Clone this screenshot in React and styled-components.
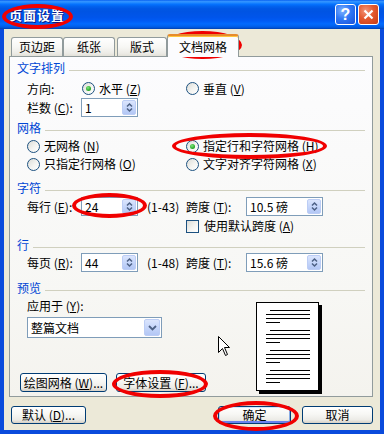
import React from "react";
import styled, { createGlobalStyle, css } from "styled-components";

const GlobalStyle = createGlobalStyle`
  html, body {
    margin: 0;
    padding: 0;
    background: #ffffff;
  }
  body {
    font-family: "Noto Sans CJK SC", "Noto Sans", sans-serif;
    font-size: 12px;
    line-height: 16px;
    color: #000000;
  }
  * {
    box-sizing: border-box;
  }
`;

const Window = styled.div`
  position: relative;
  width: 384px;
  height: 434px;
  display: flex;
  flex-direction: column;
  background: #0a4bdc;
  overflow: hidden;
`;

const TitleBar = styled.div`
  height: 29px;
  display: flex;
  align-items: center;
  gap: 2px;
  padding: 0 5px 0 9px;
  background: linear-gradient(
    180deg,
    #0058ee 0%,
    #3593ff 4%,
    #288eff 8%,
    #127dff 12%,
    #036ffc 16%,
    #0262ee 22%,
    #0057e5 30%,
    #0054e3 40%,
    #0055eb 60%,
    #005bf5 72%,
    #026afe 82%,
    #0062ef 90%,
    #0052d6 96%,
    #0040ab 100%
  );
`;

const TitleText = styled.div`
  flex: 1;
  color: #ffffff;
  font-weight: bold;
  font-size: 13px;
  letter-spacing: 1px;
  text-shadow: 1px 1px 0 #0a1883;
`;

const CaptionButton = styled.div`
  width: 21px;
  height: 21px;
  border: 1px solid #ffffff;
  border-radius: 3px;
  display: flex;
  align-items: center;
  justify-content: center;
  color: #ffffff;
  font-family: "Liberation Sans", sans-serif;
  font-weight: bold;
  font-size: 16px;
  ${(p) =>
    p.$close
      ? css`
          background: radial-gradient(circle at 35% 30%, #f2957a 0%, #e4592f 45%, #c73c14 100%);
        `
      : css`
          background: radial-gradient(circle at 35% 30%, #7fb2ff 0%, #2f78f5 45%, #1750d8 100%);
        `}
`;

const Body = styled.div`
  flex: 1;
  margin: 0 4px 4px;
  background: #ece9d8;
  display: flex;
  flex-direction: column;
  padding-top: 5px;
`;

const TabStrip = styled.div`
  display: flex;
  align-items: flex-end;
  height: 22px;
  padding-left: 7px;
  position: relative;
  z-index: 1;
`;

const Tab = styled.div`
  width: ${(p) => p.$w}px;
  height: 19px;
  margin-left: ${(p) => p.$ml || 0}px;
  border: 1px solid #919b9c;
  border-bottom: none;
  border-radius: 3px 3px 0 0;
  background: linear-gradient(180deg, #ffffff 0%, #f7f7f4 50%, #ecebe6 85%, #e2e0d8 100%);
  display: flex;
  align-items: center;
  justify-content: center;
  ${(p) =>
    p.$active &&
    css`
      height: 23px;
      margin-bottom: -1px;
      border-top: 2px solid #e68b2c;
      background: #fcfcfe;
      box-shadow: inset 0 1px 0 #ffc73c;
      padding-top: 1px;
    `}
`;

const Panel = styled.div`
  margin-left: 5px;
  width: 364px;
  height: 341px;
  border: 1px solid #919b9c;
  background: linear-gradient(180deg, #fcfcfe 0%, #f7f7f4 70%, #f4f3ee 100%);
  padding: 3px 7px 0 7px;
  display: flex;
  flex-direction: column;
`;

const GroupHeading = styled.div`
  display: flex;
  align-items: center;
  gap: 4px;
  height: 16px;
  margin-top: ${(p) => p.$mt || 0}px;
  color: #0046d5;

  &::after {
    content: "";
    flex: 1;
    height: 1px;
    margin-top: 4px;
    background: #d0d0bf;
  }
`;

const Row = styled.div`
  display: grid;
  grid-template-columns: 54px 105px 60px 1fr;
  align-items: center;
  height: ${(p) => p.$h || 19}px;
  margin-top: ${(p) => p.$mt || 0}px;
  padding-left: 10px;
  white-space: nowrap;
`;

const Cell = styled.div`
  grid-column: ${(p) => p.$col || "auto"};
  display: flex;
  align-items: center;
  gap: ${(p) => p.$gap || 0}px;
  padding-left: ${(p) => p.$pl || 0}px;
`;

const Choice = styled.span`
  display: inline-flex;
  align-items: center;
  gap: ${(p) => p.$gap || 4}px;
`;

const RadioDot = styled.span`
  position: relative;
  width: 13px;
  height: 13px;
  border-radius: 50%;
  border: 1px solid #1c5180;
  background: linear-gradient(135deg, #dcdcd7 0%, #f4f4f1 55%, #ffffff 100%);
  flex-shrink: 0;

  ${(p) =>
    p.$checked &&
    css`
      &::after {
        content: "";
        position: absolute;
        left: 3px;
        top: 3px;
        width: 5px;
        height: 5px;
        border-radius: 50%;
        background: radial-gradient(circle at 40% 35%, #7de77d 0%, #21a121 70%);
      }
    `}
`;

const CheckBox = styled.span`
  width: 13px;
  height: 13px;
  border: 1px solid #1c5180;
  background: linear-gradient(135deg, #dcdcd7 0%, #f4f4f1 55%, #ffffff 100%);
  flex-shrink: 0;
`;

const SpinBox = styled.div`
  width: ${(p) => p.$w}px;
  height: 19px;
  border: 1px solid #7f9db9;
  background: #ffffff;
  display: flex;
  align-items: center;
  padding: 0 1px 0 3px;
`;

const FieldValue = styled.span`
  flex: 1;
  white-space: pre;
`;

const ArrowButton = styled.div`
  width: ${(p) => p.$w || 14}px;
  height: ${(p) => p.$h || 15}px;
  border-radius: 2px;
  border: 1px solid #bccdf5;
  background: linear-gradient(180deg, #dbe5fd 0%, #c6d6fa 50%, #b3c7f5 100%);
  display: flex;
  align-items: center;
  justify-content: center;
`;

const ComboBox = styled.div`
  width: 135px;
  height: 21px;
  margin: 3px 0 0 7px;
  border: 1px solid #7f9db9;
  background: #ffffff;
  display: flex;
  align-items: center;
  padding: 0 1px 0 3px;
`;

const PreviewBody = styled.div`
  flex: 1;
  display: flex;
`;

const PreviewLeft = styled.div`
  width: 239px;
  padding-left: 3px;
  display: flex;
  flex-direction: column;
`;

const PlainLabel = styled.div`
  height: 16px;
  margin: 2px 0 0 7px;
`;

const ButtonRow = styled.div`
  display: flex;
  gap: 9px;
  margin-top: auto;
  margin-bottom: 4px;
`;

const XPButton = styled.div`
  width: ${(p) => p.$w}px;
  height: ${(p) => p.$h || 18}px;
  margin-left: ${(p) => (p.$push ? "auto" : "0")};
  border: 1px solid #003c74;
  border-radius: 3px;
  background: linear-gradient(180deg, #ffffff 0%, #f7f7f4 45%, #ecebe6 80%, #d6d0c5 100%);
  display: flex;
  align-items: center;
  justify-content: center;
  white-space: nowrap;
  ${(p) =>
    p.$default &&
    css`
      box-shadow: inset 0 1px 0 #cee7ff, inset 1px 0 0 #bcd4f6, inset -1px 0 0 #89ade4,
        inset 0 -2px 0 #6982ee;
    `}
`;

const PagePreview = styled.svg`
  margin-top: 6px;
  flex-shrink: 0;
`;

const Footer = styled.div`
  display: flex;
  gap: 11px;
  margin-top: 9px;
  padding: 0 7px;
`;

const Mark = styled.div`
  position: absolute;
  left: ${(p) => p.$x}px;
  top: ${(p) => p.$y}px;
  width: ${(p) => p.$w}px;
  height: ${(p) => p.$h}px;
  border: 4px solid #f00000;
  border-radius: 50%;
  pointer-events: none;
`;

const Pointer = styled.svg`
  position: absolute;
  left: 218px;
  top: 336px;
  pointer-events: none;
`;

const SpinArrows = () => (
  <svg width="7" height="11" viewBox="0 0 7 11">
    <path d="M1 4.5 L3.5 2 L6 4.5 M1 6.5 L3.5 9 L6 6.5" fill="none" stroke="#4d6185" strokeWidth="1.5" />
  </svg>
);

const DownArrow = () => (
  <svg width="9" height="6" viewBox="0 0 9 6">
    <path d="M1 1 L4.5 4.5 L8 1" fill="none" stroke="#4d6185" strokeWidth="1.8" />
  </svg>
);

const Spin = ({ w, value }) => (
  <SpinBox $w={w}>
    <FieldValue>{value}</FieldValue>
    <ArrowButton>
      <SpinArrows />
    </ArrowButton>
  </SpinBox>
);

const Radio = ({ checked, children }) => (
  <Choice>
    <RadioDot $checked={checked} />
    <span>{children}</span>
  </Choice>
);

const lineGroups = [8, 28, 48, 68];

const App = () => {
  return (
    <>
      <GlobalStyle />
      <Window>
        <TitleBar>
          <TitleText>页面设置</TitleText>
          <CaptionButton>?</CaptionButton>
          <CaptionButton $close>
            <svg width="11" height="11" viewBox="0 0 11 11">
              <path d="M1.5 1.5 L9.5 9.5 M9.5 1.5 L1.5 9.5" stroke="#ffffff" strokeWidth="2.2" />
            </svg>
          </CaptionButton>
        </TitleBar>

        <Body>
          <TabStrip>
            <Tab $w={52}>页边距</Tab>
            <Tab $w={52}>纸张</Tab>
            <Tab $w={50} $ml={2}>版式</Tab>
            <Tab $w={72} $active>文档网格</Tab>
          </TabStrip>

          <Panel>
            <GroupHeading>文字排列</GroupHeading>
            <Row $mt={3}>
              <Cell>方向:</Cell>
              <Cell $pl={1}>
                <Radio checked>
                  水平 (<u>Z</u>)
                </Radio>
              </Cell>
              <Cell $col="3 / 5">
                <Radio>
                  垂直 (<u>V</u>)
                </Radio>
              </Cell>
            </Row>
            <Row>
              <Cell>
                栏数 (<u>C</u>):
              </Cell>
              <Cell>
                <Spin w={57} value="1" />
              </Cell>
            </Row>

            <GroupHeading $mt={3}>网格</GroupHeading>
            <Row $h={18} $mt={1}>
              <Cell $col="1 / 3">
                <Radio>
                  无网格 (<u>N</u>)
                </Radio>
              </Cell>
              <Cell $col="3 / 5">
                <Radio checked>
                  指定行和字符网格 (<u>H</u>)
                </Radio>
              </Cell>
            </Row>
            <Row $h={18}>
              <Cell $col="1 / 3">
                <Radio>
                  只指定行网格 (<u>O</u>)
                </Radio>
              </Cell>
              <Cell $col="3 / 5">
                <Radio>
                  文字对齐字符网格 (<u>X</u>)
                </Radio>
              </Cell>
            </Row>

            <GroupHeading $mt={7}>字符</GroupHeading>
            <Row $mt={1}>
              <Cell>
                每行 (<u>E</u>):
              </Cell>
              <Cell $gap={9}>
                <Spin w={57} value="24" />
                <span>(1-43)</span>
              </Cell>
              <Cell>
                跨度 (<u>T</u>):
              </Cell>
              <Cell>
                <Spin w={77} value="10.5 磅" />
              </Cell>
            </Row>
            <Row $h={18} $mt={1}>
              <Cell $col="3 / 5">
                <Choice $gap={5}>
                  <CheckBox />
                  <span>
                    使用默认跨度 (<u>A</u>)
                  </span>
                </Choice>
              </Cell>
            </Row>

            <GroupHeading $mt={2}>行</GroupHeading>
            <Row>
              <Cell>
                每页 (<u>R</u>):
              </Cell>
              <Cell $gap={9}>
                <Spin w={57} value="44" />
                <span>(1-48)</span>
              </Cell>
              <Cell>
                跨度 (<u>T</u>):
              </Cell>
              <Cell>
                <Spin w={77} value="15.6 磅" />
              </Cell>
            </Row>

            <GroupHeading $mt={8}>预览</GroupHeading>
            <PreviewBody>
              <PreviewLeft>
                <PlainLabel>
                  应用于 (<u>Y</u>):
                </PlainLabel>
                <ComboBox>
                  <FieldValue>整篇文档</FieldValue>
                  <ArrowButton $w={16} $h={17}>
                    <DownArrow />
                  </ArrowButton>
                </ComboBox>
                <ButtonRow>
                  <XPButton $w={87} $h={19}>
                    绘图网格 (<u>W</u>)...
                  </XPButton>
                  <XPButton $w={90} $h={19}>
                    字体设置 (<u>F</u>)...
                  </XPButton>
                </ButtonRow>
              </PreviewLeft>
              <PagePreview width="67" height="93" viewBox="0 0 67 93" shapeRendering="crispEdges">
                <rect x="3" y="3" width="63" height="89" fill="#000000" />
                <rect x="0.5" y="0.5" width="62" height="88" fill="#ffffff" stroke="#000000" />
                {lineGroups.map((y) => (
                  <g key={y} stroke="#000000" strokeWidth="1">
                    <line x1="14" y1={y + 0.5} x2="54" y2={y + 0.5} />
                    <line x1="10" y1={y + 4.5} x2="54" y2={y + 4.5} />
                    <line x1="10" y1={y + 8.5} x2="54" y2={y + 8.5} />
                    <line x1="10" y1={y + 12.5} x2="24" y2={y + 12.5} />
                  </g>
                ))}
              </PagePreview>
            </PreviewBody>
          </Panel>

          <Footer>
            <XPButton $w={75}>
              默认 (<u>D</u>)...
            </XPButton>
            <XPButton $w={73} $push $default>
              确定
            </XPButton>
            <XPButton $w={71}>取消</XPButton>
          </Footer>
        </Body>

        <Pointer width="13" height="21" viewBox="0 0 13 21">
          <path d="M0.5 0.5 L0.5 16.5 L4.5 12.5 L7.5 19.5 L9.5 18.5 L6.5 11.5 L11.5 11.5 Z" fill="#ffffff" stroke="#000000" strokeWidth="1" />
        </Pointer>

        <Mark $x={2} $y={4} $w={71} $h={25} />
        <Mark $x={163} $y={31} $w={79} $h={28} />
        <Mark $x={172} $y={133} $w={155} $h={26} />
        <Mark $x={72} $y={193} $w={75} $h={25} />
        <Mark $x={112} $y={370} $w={96} $h={28} />
        <Mark $x={213} $y={401} $w={86} $h={30} />
      </Window>
    </>
  );
};

export default App;
